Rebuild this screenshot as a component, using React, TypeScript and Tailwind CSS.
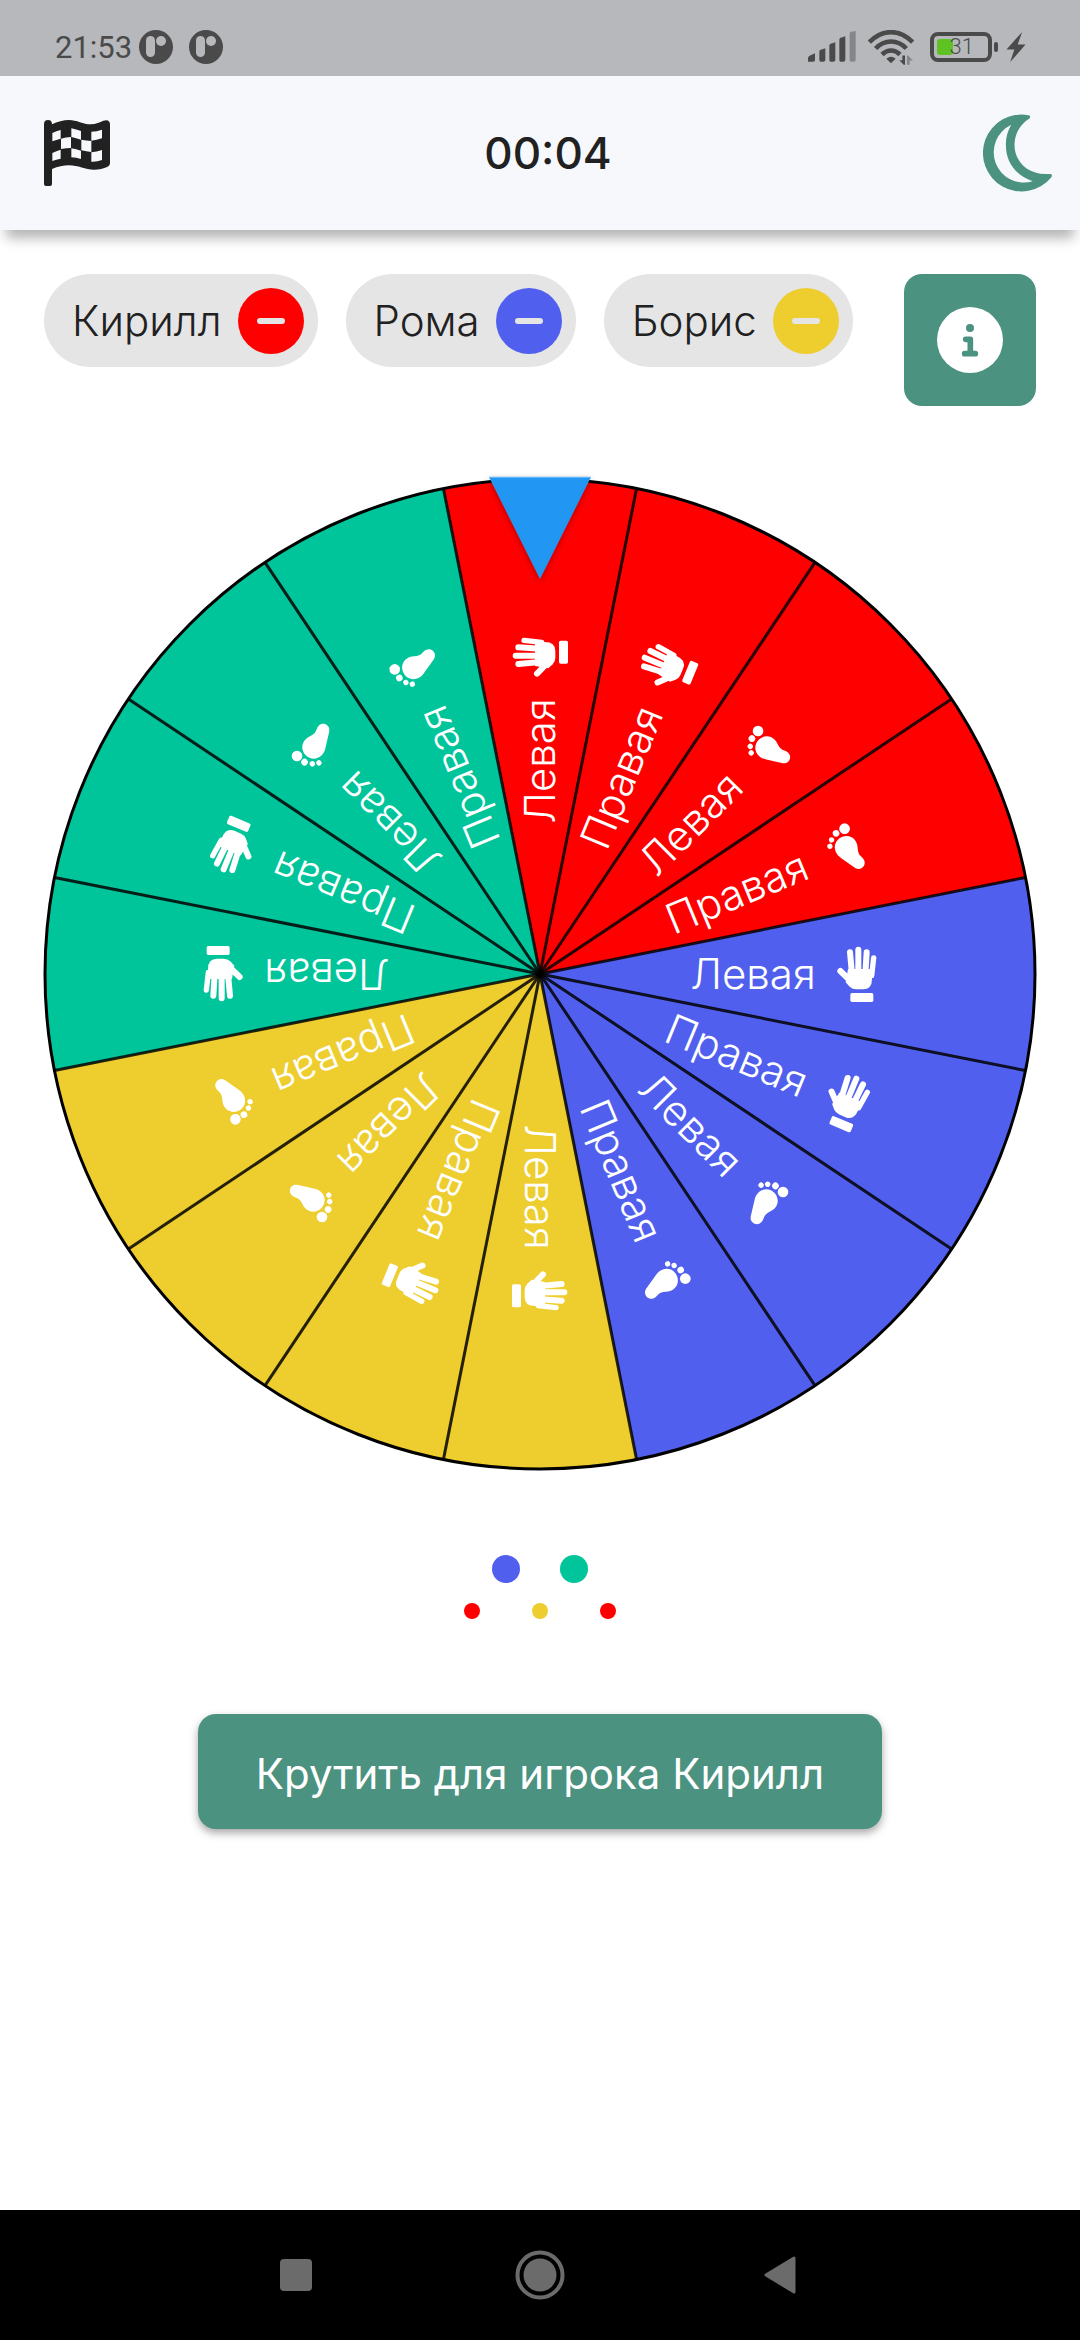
type Player = { name: string; color: string };

const RED = "#ff0000";
const BLUE = "#505fee";
const YELLOW = "#eecd2e";
const GREEN = "#00c49a";

const players: Player[] = [
  { name: "Кирилл", color: RED },
  { name: "Рома", color: BLUE },
  { name: "Борис", color: YELLOW },
];

const sectorColors = [RED, BLUE, YELLOW, GREEN];

const sectors = Array.from({ length: 16 }, (_, i) => ({
  angle: -90 + i * 22.5,
  fill: sectorColors[Math.floor(i / 4)],
  left: i % 2 === 0,
  hand: i % 4 < 2,
}));

const iconRadius = [317, 331, 324, 335];

const RADIUS = 495;

function point(deg: number) {
  const a = (deg * Math.PI) / 180;
  return `${(RADIUS * Math.cos(a)).toFixed(2)} ${(RADIUS * Math.sin(a)).toFixed(2)}`;
}

function Hand() {
  return (
    <g transform="scale(0.3333)" fill="#fff" stroke="#fff" strokeLinecap="round">
      <path d="M50-48 44 5" strokeWidth="16" />
      <path d="M29-65 25 0M4-73V0M-21-65-15 0M-50-9-10 30" strokeWidth="18" />
      <path d="M-27-15H44L45 15Q45 46 18 46H-2Q-14 46-22 38L-34 25Z" stroke="none" />
      <rect x="-20" y="57" width="69" height="27" rx="5" stroke="none" />
    </g>
  );
}

function Foot() {
  return (
    <g transform="scale(0.3333)" fill="#fff">
      <path d="M-45 1C-45-19-30-33-11-33C8-33 23-19 23 1C23 12 17 20 17 31C17 42 24 46 24 57C24 68 16 76 5 76C-4 76-8 71-12 65L-37 25C-42 18-45 10-45 1Z" />
      <circle cx="6" cy="-53" r="16" />
      <circle cx="-23" cy="-50" r="10" />
      <circle cx="-43" cy="-37" r="8" />
      <circle cx="-55" cy="-21" r="8" />
    </g>
  );
}

function Wheel() {
  return (
    <svg viewBox="-496 -496 992 992" className="block w-full overflow-visible" role="img" aria-label="Колесо">
      <defs>
        <filter id="pointer-shadow" x="-20%" y="-20%" width="140%" height="140%">
          <feDropShadow dx="0" dy="2" stdDeviation="3" floodColor="#000" floodOpacity="0.3" />
        </filter>
      </defs>
      {sectors.map((s) => (
        <path
          key={s.angle}
          d={`M0 0L${point(s.angle - 11.25)}A${RADIUS} ${RADIUS} 0 0 1 ${point(s.angle + 11.25)}Z`}
          fill={s.fill}
        />
      ))}
      {sectors.map((s) => (
        <path key={s.angle} d={`M0 0L${point(s.angle - 11.25)}`} stroke="#000" strokeOpacity="0.85" strokeWidth="3" />
      ))}
      <circle r={RADIUS} fill="none" stroke="#000" strokeWidth="3" />
      {sectors.map((s, i) => (
        <g key={s.angle} transform={`rotate(${s.angle})`}>
          <text x="213" y="15" textAnchor="middle" fill="#fff" className="font-['Inter'] text-[42px] font-light">
            {s.left ? "Левая" : "Правая"}
          </text>
          <g transform={`translate(${iconRadius[i % 4]} 0)`}>{s.hand ? <Hand /> : <Foot />}</g>
        </g>
      ))}
      <path d="M-51-497H51L0-395Z" fill="#2196f3" filter="url(#pointer-shadow)" />
      <path d="M-51-497H51" stroke="#a6d5fa" strokeWidth="1" />
    </svg>
  );
}

function NotificationIcon() {
  return (
    <svg viewBox="0 0 34 34" className="size-[34px]" aria-hidden="true">
      <circle cx="17" cy="17" r="17" fill="#4a4a4a" />
      <rect x="7" y="6" width="9" height="21" rx="4.5" fill="#b7b8bc" />
      <circle cx="22" cy="11" r="5" fill="#b7b8bc" />
    </svg>
  );
}

function StatusBar() {
  return (
    <div className="flex h-[76px] items-center justify-between bg-[#b7b8bc] pt-[18px] pr-[54px] pl-[55px] text-[#4a4a4a]">
      <div className="flex items-center">
        <span className="w-[84px] font-['Roboto'] text-[31px] leading-none">21:53</span>
        <div className="flex gap-4">
          <NotificationIcon />
          <NotificationIcon />
        </div>
      </div>
      <div className="flex items-center">
        <svg viewBox="0 0 144 96" className="h-8 w-12" fill="currentColor" aria-hidden="true">
          <path d="M0 92V81Q0 76 5 74L21 67V87Q21 92 16 92H5Q0 92 0 92Z" />
          <path d="M34 62Q34 58 38 56L52 52V86Q52 92 46 92H38Q34 92 34 86Z" />
          <path d="M64 44Q64 40 68 38L82 34V86Q82 92 76 92H68Q64 92 64 86Z" />
          <path d="M94 26Q94 22 98 20L112 16V86Q112 92 106 92H98Q94 92 94 86Z" />
          <path d="M125 8Q125 4 129 2L143 0V86Q143 92 137 92H129Q125 92 125 86Z" opacity="0.45" />
        </svg>
        <svg viewBox="0 0 138 104" className="ml-3 h-[35px] w-[46px]" fill="none" stroke="currentColor" aria-hidden="true">
          <path d="M4 36Q34 6 69 6T134 36M23 55Q43 34 69 34T115 55" strokeWidth="14" />
          <path d="M42 73Q54 61 69 61T96 73" strokeWidth="14" />
          <path d="M55 86Q69 73 83 86L69 99Z" fill="currentColor" stroke="none" />
          <path d="M103 76H111V104H107L94 90H103Z" fill="currentColor" stroke="none" />
          <path d="M117 104V76H120L135 91H125V104Z" fill="currentColor" stroke="none" opacity="0.45" />
        </svg>
        <div className="relative ml-4 h-[30px] w-[62px] rounded-lg border-4 border-current">
          <div className="absolute top-[3px] left-[3px] h-4 w-4 rounded-[3px] bg-[#5ec322]" />
          <span className="absolute inset-y-0 right-3.5 flex items-center font-['Roboto'] text-[22px] leading-none font-light">
            31
          </span>
        </div>
        <div className="ml-0.5 h-2.5 w-1 rounded-full bg-current" />
        <svg viewBox="0 0 56 88" className="ml-2 h-[30px] w-5" fill="currentColor" aria-hidden="true">
          <path d="M46 0 0 51H23L11 88 56 37H33Z" />
        </svg>
      </div>
    </div>
  );
}

function Header() {
  return (
    <header className="relative grid h-[154px] grid-cols-[1fr_auto_1fr] items-center bg-[#f6f8fc] pr-7 pl-11 shadow-[0_14px_12px_-6px_rgba(0,0,0,0.3)]">
      <button type="button" aria-label="Финиш" className="justify-self-start">
        <svg viewBox="0 0 198 198" className="size-[66px]" fill="#212121" fillRule="evenodd" aria-hidden="true">
          <path d="M0 12Q0 0 12 0T24 13C40 5 58 0 75 0C98 0 118 13 140 13C156 13 168 6 178 2Q198-4 198 14V130Q198 137 191 140C178 146 165 149 150 149C124 149 102 136 75 136C58 136 42 140 24 147V192Q24 198 18 198H6Q0 198 0 192ZM25 39V64Q37 59 50 56V30Q37 33 25 39ZM82 25V51Q97 54 111 59V33Q97 29 82 25ZM142 35V62Q158 61 174 55V29Q158 35 142 35ZM51 56V87Q66 84 81 84V51Q66 52 51 56ZM112 59V91Q127 95 142 96V63Q127 62 112 59ZM25 99V123Q37 118 50 116V89Q37 93 25 99ZM82 85V112Q97 113 111 117V92Q97 87 82 85ZM142 97V125Q158 126 174 120V90Q158 96 142 97Z" />
        </svg>
      </button>
      <h1 className="font-['Inter'] text-[44px] leading-none font-medium text-[#212121]">00:04</h1>
      <button type="button" aria-label="Тёмная тема" className="justify-self-end">
        <svg viewBox="609 342 208 234" className="h-[78px] w-[69px]" fill="#4b9280" fillRule="evenodd" aria-hidden="true">
          <path d="M746 345A116 116 0 1 0 815 532Q820 522 811 522C745 528 704 485 704 435C704 400 722 372 749 355Q755 347 746 345ZM695 374A91 91 0 0 0 759 544C710 527 678 490 678 435C678 412 684 390 695 374Z" />
        </svg>
      </button>
    </header>
  );
}

function PlayerChip({ player }: { player: Player }) {
  return (
    <li className="flex h-[93px] items-center gap-4 rounded-full bg-[#e5e5e5] pr-3.5 pl-7 font-['Inter'] text-[42px] font-light text-[#212121]">
      {player.name}
      <button
        type="button"
        aria-label={`Удалить игрока ${player.name}`}
        className="flex size-[66px] items-center justify-center rounded-full"
        style={{ backgroundColor: player.color }}
      >
        <span className="h-1.5 w-7 rounded-full bg-[#e5e5e5]" />
      </button>
    </li>
  );
}

export default function App() {
  return (
    <div className="flex min-h-screen flex-col bg-white">
      <StatusBar />
      <Header />
      <main className="flex flex-1 flex-col items-center px-11 pt-11">
        <div className="flex w-full items-start justify-between">
          <ul className="flex gap-7">
            {players.map((p) => (
              <PlayerChip key={p.name} player={p} />
            ))}
          </ul>
          <button
            type="button"
            aria-label="Информация"
            className="flex size-[132px] items-center justify-center rounded-[18px] bg-[#4b9280]"
          >
            <svg viewBox="0 0 198 198" className="size-[66px]" aria-hidden="true">
              <circle cx="99" cy="99" r="99" fill="#fff" />
              <circle cx="99" cy="63" r="12" fill="#4b9280" />
              <path d="M86 97H100V139M83 140H115" fill="none" stroke="#4b9280" strokeWidth="17" strokeLinecap="round" strokeLinejoin="round" />
            </svg>
          </button>
        </div>

        <div className="mt-[72px] w-full">
          <Wheel />
        </div>

        <div className="mt-[85px] flex flex-col items-center gap-5">
          <div className="flex gap-10">
            <span className="size-7 rounded-full bg-[#505fee]" />
            <span className="size-7 rounded-full bg-[#00c49a]" />
          </div>
          <div className="flex gap-[52px]">
            <span className="size-4 rounded-full bg-[#ff0000]" />
            <span className="size-4 rounded-full bg-[#eecd2e]" />
            <span className="size-4 rounded-full bg-[#ff0000]" />
          </div>
        </div>

        <button
          type="button"
          className="mt-[95px] h-[115px] rounded-[18px] bg-[#4b9280] px-[58px] pt-1 font-['Inter'] text-[42px] text-white shadow-[0_4px_8px_rgba(0,0,0,0.35)]"
        >
          Крутить для игрока Кирилл
        </button>
      </main>

      <nav className="grid h-[130px] grid-cols-[1fr_auto_1fr] items-center bg-black px-[280px]">
        <button type="button" aria-label="Недавние" className="size-8 rounded-sm bg-[#6b6b6b]" />
        <button type="button" aria-label="Домой">
          <svg viewBox="0 0 50 50" className="size-[50px]" fill="none" aria-hidden="true">
            <circle cx="25" cy="25" r="22.5" stroke="#6b6b6b" strokeWidth="4" />
            <circle cx="25" cy="25" r="16.5" fill="#6b6b6b" />
          </svg>
        </button>
        <button type="button" aria-label="Назад" className="mr-1 justify-self-end">
          <svg viewBox="0 0 32 38" className="h-[38px] w-8" fill="#6b6b6b" stroke="#6b6b6b" strokeWidth="3" strokeLinejoin="round" aria-hidden="true">
            <path d="M2 19 30 2V36Z" />
          </svg>
        </button>
      </nav>
    </div>
  );
}
